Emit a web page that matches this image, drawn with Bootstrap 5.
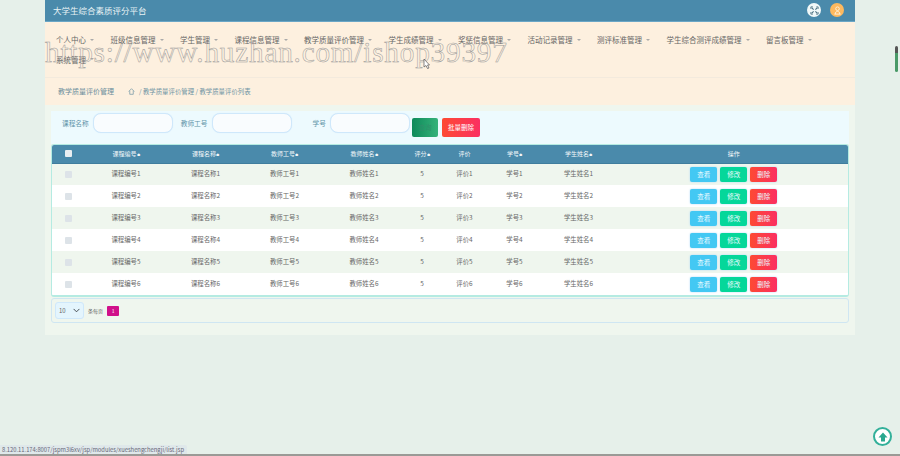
<!DOCTYPE html>
<html lang="zh">
<head>
<meta charset="utf-8">
<title>大学生综合素质评分平台</title>
<link href="https://cdn.jsdelivr.net/npm/bootstrap@5.3.0/dist/css/bootstrap.min.css" rel="stylesheet">
<style>
html,body{height:456px;overflow:hidden}
body{background:#e6f0ea;font-family:"Noto Sans CJK SC","Liberation Sans",sans-serif;color:#555;font-size:7px;position:relative}
.shell{width:810px;margin-left:45px}
.topbar{height:22px;background:#4a8aab;padding:0 11px 1px 8px;border-bottom:1px solid #6aa6c6}
.brand-name{font-size:8.5px;color:#e8f2f5;line-height:21px}
.icon-pair{column-gap:9px}
.round-ico{width:14px;height:14px;border-radius:50%}
.ico-white{background:#f1f8f8}
.ico-orange{background:#fdb95f}
.menu-area{height:56px;background:#fdf0df;padding:8px 0 0 11px;border-bottom:1px solid #f3eadd;align-content:flex-start}
.menu-area .nav-link{padding:0 24.5px 0 0;font-size:7.5px;line-height:19.6px;color:#666;position:relative}
.menu-area .dropdown-toggle::after{position:absolute;margin:0;top:8.5px;border-width:2px 2px 0;color:#aaa;margin-left:4px}
.crumbs{height:27px;background:#fdf0df;padding-left:13px;color:#6b8e9c}
.crumb-title{font-size:7px;width:70px}
.crumb-path{font-size:6.4px;color:#6f94a4}
.work-area{height:230px;background:#eff6ee;padding:6px 6px 0}
.search-panel{height:33px;background:#edfafe;padding:2px 0 0 11px}
.search-label{font-size:6.7px;color:#5e93a8;line-height:20px}
.search-box{height:20px;width:80px;border:1.5px solid #cfe8fb;border-radius:8px;background:#f9fcfe;padding:0;min-height:0;box-shadow:0 0 1px #cfe8fb}
.act-btn{font-size:6.5px;border:0;border-radius:2px;padding:0;color:#fff;height:19px;margin-top:5px}
.act-search{width:26px;background:linear-gradient(90deg,#0e8a5a,#35b27a);color:#2f8f6a}
.act-bulk{width:38px;background:linear-gradient(90deg,#fd4a33,#fb2f62)}
.grid-wrap{width:798px;border:1px solid #b5ebe2;border-width:1px 1.5px 2px;border-radius:3px;overflow:hidden;background:#fff}
.score-grid{table-layout:fixed;width:100%;margin:0;border-collapse:collapse}
.score-grid th,.score-grid td{border:0;padding:0;text-align:center;vertical-align:middle;font-weight:400;font-size:6.4px}
.score-grid thead th{height:18px;font-size:6px;background:#4a8aab;color:#f2f7f9;border-bottom:1px solid #3f7d9d}
.score-grid tbody td{height:22px;color:#666;background:#fff}
.score-grid tbody tr:nth-child(odd) td{background:#eff6ee}
.score-grid .ops-col{padding-left:3.4px}
.sort-ico{font-size:4px}
.tick{width:7px;height:7px;display:block;margin:0 auto;background:#dde3e8;border-radius:1px}
.tick-head{background:#e9eef1}
.row-btn{font-size:6.5px;width:27px;height:15px;padding:0;border:0;border-radius:2px;color:#eafaff;box-shadow:0 0 2px #a9d5f5;margin:0 1.5px;line-height:15px}
.btn-view{background:#43c8f3}
.btn-edit{background:#05d79a}
.btn-drop{background:linear-gradient(90deg,#fd4a33,#fb2f62)}
.pager-box{width:798px;height:25px;margin-top:1px;border:1px solid #cfe6f2;border-radius:3px;background:#eff6ee;padding:0 0 0 3px;font-size:5px;color:#666}
.page-size{width:29px;height:17px;min-height:0;padding:0 0 0 3px;font-size:6px;background-color:#e4f5fd;border:1px solid #cfe8fb;border-radius:3px;background-size:7px 7px;background-position:right 3px center;color:#666}
.page-num{width:12px;height:10px;background:#d0108a;color:#fff;font-size:5px;border-radius:1px;line-height:10px;text-align:center}
.stamp{position:absolute;left:45px;top:37px;font-family:"Liberation Serif",serif;font-size:29.3px;line-height:30px;letter-spacing:.76px;color:transparent;-webkit-text-stroke:.5px #999;white-space:nowrap;pointer-events:none}
.cursor-mark{position:absolute;left:423px;top:59px}
.scroll-mark{position:absolute;left:895px;top:46px;width:3px;height:26px;border-radius:2px;background:linear-gradient(#555 0 7px,#4a9a68 7px)}
.top-link{position:absolute;left:873px;top:427px;width:19px;height:19px;border-radius:50%;background:#fff;border:2px solid #33b09a}
.status-tip{position:absolute;left:0;top:445px;height:9px;width:187px;background:#dfe8ea;color:#667;font-size:5.8px;line-height:9px;padding-left:2px;white-space:nowrap;overflow:hidden;border-radius:0 2px 0 0}
.bottom-edge{position:absolute;left:0;right:0;top:454px;height:2px;background:#9a9a96}
</style>
</head>
<body>
<div class="shell">
  <header class="topbar d-flex align-items-center justify-content-between">
    <div class="brand-name">大学生综合素质评分平台</div>
    <div class="d-flex icon-pair">
      <span class="round-ico ico-white d-flex align-items-center justify-content-center">
        <svg width="9" height="9" viewBox="0 0 10 10" fill="none" stroke="#4a6f80" stroke-width="1.2"><path d="M2 2l2 2M8 2L6 4M2 8l2-2M8 8L6 6"/><path d="M1 3.2V1h2.200M7 1h2v2.200M1 6.800V9h2.200M9 6.800V9H6.800" stroke-width="1"/></svg>
      </span>
      <span class="round-ico ico-orange d-flex align-items-center justify-content-center">
        <svg width="9" height="9" viewBox="0 0 10 10" fill="none" stroke="#fff3df" stroke-width="1"><circle cx="5" cy="3" r="2"/><path d="M1.500 9h7M2.500 9c0-2 1-3 2.500-3s2.500 1 2.500 3"/></svg>
      </span>
    </div>
  </header>
  <nav class="menu-area nav">
    <a class="nav-link dropdown-toggle" href="#">个人中心</a>
    <a class="nav-link dropdown-toggle" href="#">班级信息管理</a>
    <a class="nav-link dropdown-toggle" href="#">学生管理</a>
    <a class="nav-link dropdown-toggle" href="#">课程信息管理</a>
    <a class="nav-link dropdown-toggle" href="#">教学质量评价管理</a>
    <a class="nav-link dropdown-toggle" href="#">学生成绩管理</a>
    <a class="nav-link dropdown-toggle" href="#">奖惩信息管理</a>
    <a class="nav-link dropdown-toggle" href="#">活动记录管理</a>
    <a class="nav-link dropdown-toggle" href="#">测评标准管理</a>
    <a class="nav-link dropdown-toggle" href="#">学生综合测评成绩管理</a>
    <a class="nav-link dropdown-toggle" href="#">留言板管理</a>
    <a class="nav-link dropdown-toggle" href="#">系统管理</a>
  </nav>
  <div class="crumbs d-flex align-items-center">
    <span class="crumb-title">教学质量评价管理</span>
    <svg class="me-1" width="7" height="7" viewBox="0 0 10 10" fill="none" stroke="#6f94a4" stroke-width="1"><path d="M1 5l4-4 4 4M2.500 4v5h5V4"/></svg>
    <span class="crumb-path">/ 教学质量评价管理 / 教学质量评价列表</span>
  </div>
  <main class="work-area">
    <form class="search-panel d-flex">
      <span class="search-label" style="margin-right:4px">课程名称</span>
      <input class="form-control search-box" type="text" aria-label="课程名称">
      <span class="search-label" style="margin:0 4px 0 8px">教师工号</span>
      <input class="form-control search-box" type="text" aria-label="教师工号">
      <span class="search-label" style="margin:0 4px 0 21px">学号</span>
      <input class="form-control search-box" type="text" aria-label="学号">
      <button class="btn act-btn act-search" type="button" style="margin-left:2px">查询</button>
      <button class="btn act-btn act-bulk" type="button" style="margin-left:4px">批量删除</button>
    </form>
    <div class="grid-wrap">
      <table class="table score-grid">
        <colgroup>
          <col style="width:33px"><col style="width:82px"><col style="width:77px"><col style="width:81px"><col style="width:78px"><col style="width:38px"><col style="width:47px"><col style="width:53px"><col style="width:75px"><col>
        </colgroup>
        <thead>
          <tr><th><span class="tick tick-head"></span></th><th>课程编号<span class="sort-ico">≑</span></th><th>课程名称<span class="sort-ico">≑</span></th><th>教师工号<span class="sort-ico">≑</span></th><th>教师姓名<span class="sort-ico">≑</span></th><th>评分<span class="sort-ico">≑</span></th><th>评价</th><th>学号<span class="sort-ico">≑</span></th><th>学生姓名<span class="sort-ico">≑</span></th><th class="ops-col">操作</th></tr>
        </thead>
        <tbody>
          <tr><td><span class="tick"></span></td><td>课程编号1</td><td>课程名称1</td><td>教师工号1</td><td>教师姓名1</td><td>5</td><td>评价1</td><td>学号1</td><td>学生姓名1</td><td class="ops-col"><button class="btn row-btn btn-view">查看</button><button class="btn row-btn btn-edit">修改</button><button class="btn row-btn btn-drop">删除</button></td></tr>
          <tr><td><span class="tick"></span></td><td>课程编号2</td><td>课程名称2</td><td>教师工号2</td><td>教师姓名2</td><td>5</td><td>评价2</td><td>学号2</td><td>学生姓名2</td><td class="ops-col"><button class="btn row-btn btn-view">查看</button><button class="btn row-btn btn-edit">修改</button><button class="btn row-btn btn-drop">删除</button></td></tr>
          <tr><td><span class="tick"></span></td><td>课程编号3</td><td>课程名称3</td><td>教师工号3</td><td>教师姓名3</td><td>5</td><td>评价3</td><td>学号3</td><td>学生姓名3</td><td class="ops-col"><button class="btn row-btn btn-view">查看</button><button class="btn row-btn btn-edit">修改</button><button class="btn row-btn btn-drop">删除</button></td></tr>
          <tr><td><span class="tick"></span></td><td>课程编号4</td><td>课程名称4</td><td>教师工号4</td><td>教师姓名4</td><td>5</td><td>评价4</td><td>学号4</td><td>学生姓名4</td><td class="ops-col"><button class="btn row-btn btn-view">查看</button><button class="btn row-btn btn-edit">修改</button><button class="btn row-btn btn-drop">删除</button></td></tr>
          <tr><td><span class="tick"></span></td><td>课程编号5</td><td>课程名称5</td><td>教师工号5</td><td>教师姓名5</td><td>5</td><td>评价5</td><td>学号5</td><td>学生姓名5</td><td class="ops-col"><button class="btn row-btn btn-view">查看</button><button class="btn row-btn btn-edit">修改</button><button class="btn row-btn btn-drop">删除</button></td></tr>
          <tr><td><span class="tick"></span></td><td>课程编号6</td><td>课程名称6</td><td>教师工号6</td><td>教师姓名6</td><td>5</td><td>评价6</td><td>学号6</td><td>学生姓名6</td><td class="ops-col"><button class="btn row-btn btn-view">查看</button><button class="btn row-btn btn-edit">修改</button><button class="btn row-btn btn-drop">删除</button></td></tr>
        </tbody>
      </table>
    </div>
    <div class="pager-box d-flex align-items-center gap-1">
      <select class="form-select page-size" aria-label="每页条数"><option>10</option></select>
      <span>条每页</span>
      <span class="page-num">1</span>
    </div>
  </main>
</div>
<div class="stamp">https://www.huzhan.com/ishop39397</div>
<svg class="cursor-mark" width="7" height="10" viewBox="0 0 7 10"><path d="M1 0v8l2-1.500L4.500 9.500 6 9 4.500 6H6.500z" fill="#fff" stroke="#555" stroke-width=".7"/></svg>
<div class="scroll-mark"></div>
<a class="top-link d-flex align-items-center justify-content-center" href="#" aria-label="返回顶部">
  <svg width="10" height="10" viewBox="0 0 10 10"><path d="M5 .5L9.500 5.500H7V9.500H3V5.500H.5z" fill="#2aa88f"/></svg>
</a>
<div class="status-tip">8.120.11.174:8007/jspm3l6xv/jsp/modules/xueshengchengji/list.jsp</div>
<div class="bottom-edge"></div>
<script src="https://cdn.jsdelivr.net/npm/bootstrap@5.3.0/dist/js/bootstrap.bundle.min.js"></script>
</body>
</html>
